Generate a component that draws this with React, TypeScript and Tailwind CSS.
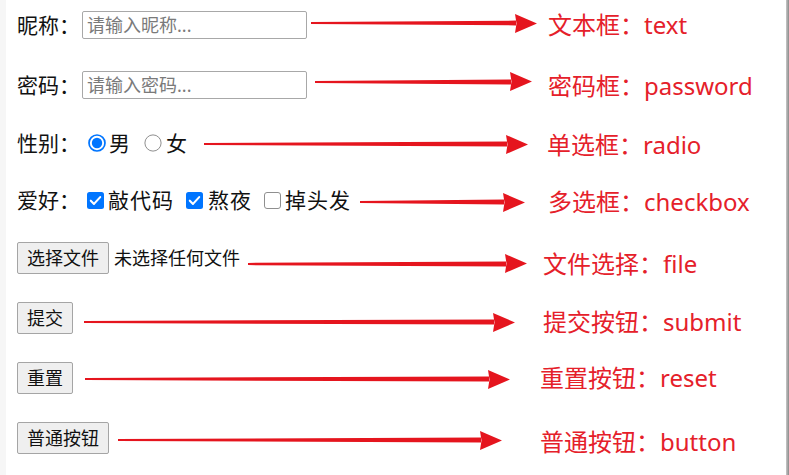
import React from "react";

const FONT = { fontFamily: '"Noto Sans", "Noto Sans CJK SC", sans-serif' };

function Arrow({ cls }: { cls: string }) {
  return (
    <div className={"flex items-center " + cls}>
      <svg className="flex-1 h-[6px]" viewBox="0 0 100 6" preserveAspectRatio="none">
        <polygon points="0,1.9 100,0.6 100,5.4 0,4.1" fill="#e5151e" />
      </svg>
      <svg width="22" height="19" viewBox="0 0 22 19" className="-ml-px">
        <polygon points="0,0 22,9.5 0,19 1.5,9.5" fill="#e5151e" />
      </svg>
    </div>
  );
}

function Label({ children }: { children: React.ReactNode }) {
  return <span className="text-[21px] text-[#111] leading-none whitespace-nowrap w-[65px]">{children}</span>;
}

function Red({ children, cls }: { children: React.ReactNode; cls: string }) {
  return (
    <div className={"text-[24px] text-[#e5202a] leading-none whitespace-nowrap " + cls}>{children}</div>
  );
}

function Radio({ checked }: { checked?: boolean }) {
  return checked ? (
    <svg width="18" height="18" viewBox="0 0 18 18" className="shrink-0">
      <circle cx="9" cy="9" r="8" fill="#fff" stroke="#0075ff" strokeWidth="1.7" />
      <circle cx="9" cy="9" r="5.2" fill="#0075ff" />
    </svg>
  ) : (
    <svg width="18" height="18" viewBox="0 0 18 18" className="shrink-0">
      <circle cx="9" cy="9" r="8.1" fill="#fff" stroke="#8f8f8f" strokeWidth="1" />
    </svg>
  );
}

function Check({ checked }: { checked?: boolean }) {
  return checked ? (
    <svg width="17" height="17" viewBox="0 0 17 17" className="shrink-0">
      <rect x="0" y="0" width="17" height="17" rx="2.5" fill="#0075ff" />
      <polyline points="3.8,8.7 7,11.9 13.2,5.1" fill="none" stroke="#fff" strokeWidth="2.1" strokeLinecap="round" strokeLinejoin="round" />
    </svg>
  ) : (
    <svg width="17" height="17" viewBox="0 0 17 17" className="shrink-0">
      <rect x="0.5" y="0.5" width="16" height="16" rx="2.5" fill="#fff" stroke="#8f8f8f" strokeWidth="1" />
    </svg>
  );
}

function Btn({ children }: { children: React.ReactNode }) {
  return (
    <button className="h-[32px] px-[9px] bg-[#efefef] border border-[#a5a5a5] rounded-[2px] text-[18px] text-[#111] leading-none whitespace-nowrap">
      {children}
    </button>
  );
}

function Input({ ph }: { ph: string }) {
  return (
    <input
      className="w-[225px] h-[28px] border border-[#a8a8a8] rounded-[2px] px-[4px] text-[18px] leading-none placeholder:text-[#7a7a7a] outline-none"
      placeholder={ph}
      style={FONT}
    />
  );
}

export default function App() {
  return (
    <div className="w-[789px] h-[475px] flex bg-white overflow-hidden" style={FONT}>
      <div className="w-[6px] h-full bg-[#f6f6f6]" />
      <div className="flex-1 flex flex-col pl-[11px] pt-[5px]">
        {/* Row 1 */}
        <div className="h-[40px] flex items-center">
          <Label>昵称：</Label>
          <Input ph="请输入昵称..." />
          <Arrow cls="flex-1 ml-[4px] mr-[11px] mb-[4px]" />
          <Red cls="w-[238px]">文本框：text</Red>
        </div>
        {/* Row 2 */}
        <div className="h-[40px] mt-[20px] flex items-center">
          <Label>密码：</Label>
          <Input ph="请输入密码..." />
          <Arrow cls="flex-1 ml-[8px] mr-[16px] mb-[7px]" />
          <Red cls="w-[238px] mt-[1px]">密码框：password</Red>
        </div>
        {/* Row 3 */}
        <div className="h-[40px] mt-[18px] flex items-center">
          <Label>性别：</Label>
          <div className="flex items-center ml-[6px]">
            <Radio checked />
            <span className="text-[21px] leading-none ml-[3px] text-[#111]">男</span>
            <span className="ml-[14px]"><Radio /></span>
            <span className="text-[21px] leading-none ml-[4px] text-[#111]">女</span>
          </div>
          <Arrow cls="flex-1 ml-[17px] mr-[19px] mt-[2px]" />
          <Red cls="w-[239px] mt-[4px]">单选框：radio</Red>
        </div>
        {/* Row 4 */}
        <div className="h-[40px] mt-[17px] flex items-center">
          <Label>爱好：</Label>
          <div className="flex items-center ml-[5px]">
            <Check checked />
            <span className="text-[21px] leading-none ml-[4px] text-[#111] tracking-[1px]">敲代码</span>
            <span className="ml-[12px]"><Check checked /></span>
            <span className="text-[21px] leading-none ml-[5px] text-[#111] tracking-[1px]">熬夜</span>
            <span className="ml-[12px]"><Check /></span>
            <span className="text-[21px] leading-none ml-[4px] text-[#111] tracking-[1px]">掉头发</span>
          </div>
          <Arrow cls="flex-1 ml-[9px] mr-[23px] mt-[4px]" />
          <Red cls="w-[238px] mt-[3px]">多选框：checkbox</Red>
        </div>
        {/* Row 5 */}
        <div className="h-[40px] mt-[18px] flex items-center">
          <Btn>选择文件</Btn>
          <span className="text-[18px] leading-none ml-[5px] text-[#111] whitespace-nowrap">未选择任何文件</span>
          <Arrow cls="flex-1 ml-[8px] mr-[16px] mt-[11px]" />
          <Red cls="w-[243px] mt-[11px]">文件选择：file</Red>
        </div>
        {/* Row 6 */}
        <div className="h-[40px] mt-[20px] flex items-center">
          <Btn>提交</Btn>
          <Arrow cls="flex-1 ml-[11px] mr-[28px] mt-[8px]" />
          <Red cls="w-[243px] mt-[8px]">提交按钮：submit</Red>
        </div>
        {/* Row 7 */}
        <div className="h-[40px] mt-[20px] flex items-center">
          <Btn>重置</Btn>
          <Arrow cls="flex-1 ml-[12px] mr-[30px] mt-[2px]" />
          <Red cls="w-[246px]">重置按钮：reset</Red>
        </div>
        {/* Row 8 */}
        <div className="h-[40px] mt-[20px] flex items-center">
          <Btn>普通按钮</Btn>
          <Arrow cls="flex-1 ml-[9px] mr-[38px] mt-[4px]" />
          <Red cls="w-[246px] mt-[8px]">普通按钮：button</Red>
        </div>
      </div>
      <div className="w-[3px] h-full bg-gradient-to-r from-[#c8c8c8] to-[#8a8a8a]" />
    </div>
  );
}
